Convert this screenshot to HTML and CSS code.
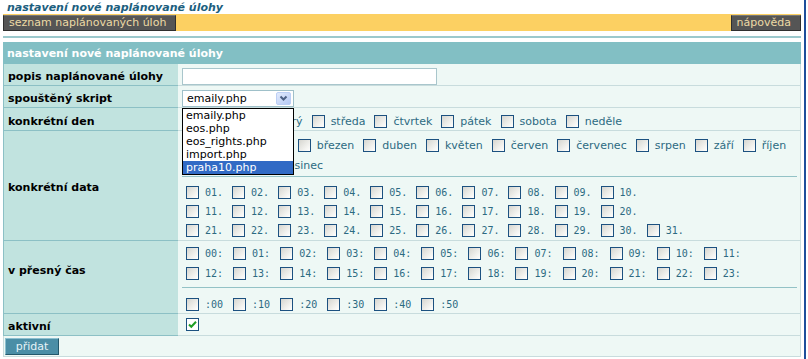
FILE: index.html
```html
<!DOCTYPE html>
<html lang="cs">
<head>
  <meta charset="UTF-8">
  <title>nastavení nové naplánované úlohy</title>
  <link rel="stylesheet" href="styles.css">
</head>
<body>
  <div class="page">
    <!-- Page title -->
    <h1 class="page-title">nastavení nové naplánované úlohy</h1>

    <!-- Toolbar -->
    <div class="toolbar">
      <a href="#" class="tool-btn">seznam naplánovaných úloh</a>
      <a href="#" class="tool-btn">nápověda</a>
    </div>

    <div class="divider"></div>

    <form class="task-form">
      <table class="form-table">
        <tr>
          <th colspan="2" class="form-head">nastavení nové naplánované úlohy</th>
        </tr>

        <!-- Description -->
        <tr>
          <td class="label">popis naplánované úlohy</td>
          <td class="value"><input type="text" class="text-input" name="popis"></td>
        </tr>

        <!-- Script select (shown opened) -->
        <tr>
          <td class="label">spouštěný skript</td>
          <td class="value">
            <div class="picker">
              <div class="picker-field">
                <span>emaily.php</span>
                <svg class="picker-arrow" width="15" height="13" viewBox="0 0 15 13">
                  <defs>
                    <linearGradient id="arrowBg" x1="0" y1="0" x2="1" y2="1">
                      <stop offset="0" stop-color="#e4ecfd"/>
                      <stop offset="1" stop-color="#b3c8f4"/>
                    </linearGradient>
                  </defs>
                  <rect x="0.5" y="0.5" width="14" height="12" rx="1.5" fill="url(#arrowBg)" stroke="#bccff5"/>
                  <path d="M4.5 4.5 L7.5 7.5 L10.5 4.5" fill="none" stroke="#4d6185" stroke-width="2"/>
                </svg>
              </div>
              <ul class="picker-list">
                <li>emaily.php</li>
                <li>eos.php</li>
                <li>eos_rights.php</li>
                <li>import.php</li>
                <li class="is-selected">praha10.php</li>
              </ul>
            </div>
          </td>
        </tr>

        <!-- Days of week -->
        <tr>
          <td class="label">konkrétní den</td>
          <td class="value value-days">
            <div class="choices">
              <label class="opt"><span class="box"></span>pondělí</label>
              <label class="opt"><span class="box"></span>úterý</label>
              <label class="opt"><span class="box"></span>středa</label>
              <label class="opt"><span class="box"></span>čtvrtek</label>
              <label class="opt"><span class="box"></span>pátek</label>
              <label class="opt"><span class="box"></span>sobota</label>
              <label class="opt"><span class="box"></span>neděle</label>
            </div>
          </td>
        </tr>

        <!-- Months and dates -->
        <tr>
          <td class="label">konkrétní data</td>
          <td class="value value-dates">
            <div class="choices choices-months">
              <label class="opt"><span class="box"></span>leden</label>
              <label class="opt"><span class="box"></span>únor</label>
              <label class="opt"><span class="box"></span>březen</label>
              <label class="opt"><span class="box"></span>duben</label>
              <label class="opt"><span class="box"></span>květen</label>
              <label class="opt"><span class="box"></span>červen</label>
              <label class="opt"><span class="box"></span>červenec</label>
              <label class="opt"><span class="box"></span>srpen</label>
              <label class="opt"><span class="box"></span>září</label>
              <label class="opt"><span class="box"></span>říjen</label>
              <label class="opt"><span class="box"></span>listopad</label>
              <label class="opt"><span class="box"></span>prosinec</label>
            </div>
            <div class="split"></div>
            <div class="num-row">
              <label class="num"><span class="box"></span>01.</label>
              <label class="num"><span class="box"></span>02.</label>
              <label class="num"><span class="box"></span>03.</label>
              <label class="num"><span class="box"></span>04.</label>
              <label class="num"><span class="box"></span>05.</label>
              <label class="num"><span class="box"></span>06.</label>
              <label class="num"><span class="box"></span>07.</label>
              <label class="num"><span class="box"></span>08.</label>
              <label class="num"><span class="box"></span>09.</label>
              <label class="num"><span class="box"></span>10.</label>
            </div>
            <div class="num-row">
              <label class="num"><span class="box"></span>11.</label>
              <label class="num"><span class="box"></span>12.</label>
              <label class="num"><span class="box"></span>13.</label>
              <label class="num"><span class="box"></span>14.</label>
              <label class="num"><span class="box"></span>15.</label>
              <label class="num"><span class="box"></span>16.</label>
              <label class="num"><span class="box"></span>17.</label>
              <label class="num"><span class="box"></span>18.</label>
              <label class="num"><span class="box"></span>19.</label>
              <label class="num"><span class="box"></span>20.</label>
            </div>
            <div class="num-row">
              <label class="num"><span class="box"></span>21.</label>
              <label class="num"><span class="box"></span>22.</label>
              <label class="num"><span class="box"></span>23.</label>
              <label class="num"><span class="box"></span>24.</label>
              <label class="num"><span class="box"></span>25.</label>
              <label class="num"><span class="box"></span>26.</label>
              <label class="num"><span class="box"></span>27.</label>
              <label class="num"><span class="box"></span>28.</label>
              <label class="num"><span class="box"></span>29.</label>
              <label class="num"><span class="box"></span>30.</label>
              <label class="num"><span class="box"></span>31.</label>
            </div>
          </td>
        </tr>

        <!-- Exact time -->
        <tr>
          <td class="label label-raised">v přesný čas</td>
          <td class="value value-times">
            <div class="num-row num-row-time">
              <label class="num"><span class="box"></span>00:</label>
              <label class="num"><span class="box"></span>01:</label>
              <label class="num"><span class="box"></span>02:</label>
              <label class="num"><span class="box"></span>03:</label>
              <label class="num"><span class="box"></span>04:</label>
              <label class="num"><span class="box"></span>05:</label>
              <label class="num"><span class="box"></span>06:</label>
              <label class="num"><span class="box"></span>07:</label>
              <label class="num"><span class="box"></span>08:</label>
              <label class="num"><span class="box"></span>09:</label>
              <label class="num"><span class="box"></span>10:</label>
              <label class="num"><span class="box"></span>11:</label>
            </div>
            <div class="num-row num-row-time">
              <label class="num"><span class="box"></span>12:</label>
              <label class="num"><span class="box"></span>13:</label>
              <label class="num"><span class="box"></span>14:</label>
              <label class="num"><span class="box"></span>15:</label>
              <label class="num"><span class="box"></span>16:</label>
              <label class="num"><span class="box"></span>17:</label>
              <label class="num"><span class="box"></span>18:</label>
              <label class="num"><span class="box"></span>19:</label>
              <label class="num"><span class="box"></span>20:</label>
              <label class="num"><span class="box"></span>21:</label>
              <label class="num"><span class="box"></span>22:</label>
              <label class="num"><span class="box"></span>23:</label>
            </div>
            <div class="split split-time"></div>
            <div class="num-row num-row-time num-row-last">
              <label class="num"><span class="box"></span>:00</label>
              <label class="num"><span class="box"></span>:10</label>
              <label class="num"><span class="box"></span>:20</label>
              <label class="num"><span class="box"></span>:30</label>
              <label class="num"><span class="box"></span>:40</label>
              <label class="num"><span class="box"></span>:50</label>
            </div>
          </td>
        </tr>

        <!-- Active -->
        <tr>
          <td class="label">aktivní</td>
          <td class="value">
            <span class="box box-checked">
              <svg width="11" height="11" viewBox="0 0 11 11">
                <path d="M2 5.5 L4.3 7.8 L9 2.8" fill="none" stroke="#1f9e25" stroke-width="2"/>
              </svg>
            </span>
          </td>
        </tr>

        <!-- Submit -->
        <tr>
          <td colspan="2" class="submit-cell">
            <button type="submit" class="add-btn">přidat</button>
          </td>
        </tr>
      </table>
    </form>
  </div>

  <div class="frame-edge"></div>
</body>
</html>
```

FILE: styles.css
```css
/* Page */
body {
  margin: 0;
  font-family: "DejaVu Sans", Verdana, sans-serif;
  font-size: 11px;
  color: #000;
  background: #fff;
  display: flex;
  min-height: 100vh;
}

.page {
  width: 798px;
  margin-left: 3px;
}

.frame-edge {
  width: 2px;
  margin-left: 3px;
  background: #1d4e9b;
}

/* Title */
.page-title {
  margin: 0;
  padding: 1px 0 0 4px;
  height: 13px;
  font-size: 11px;
  line-height: 13px;
  font-style: italic;
  font-weight: bold;
  color: #1b5e7e;
}

/* Yellow toolbar */
.toolbar {
  display: flex;
  justify-content: space-between;
  align-items: flex-start;
  height: 17px;
  background: #fcd062;
}

.tool-btn {
  margin-top: 1px;
  padding: 0 9px 0 5px;
  height: 14px;
  line-height: 14px;
  background: #555;
  border: 1px solid #2f2f2f;
  border-top-color: #777;
  color: #ecdaa5;
  text-decoration: none;
}

.divider {
  height: 2px;
  margin: 5px 0 4px;
  background: #9cc9cd;
}

/* Form table */
.form-table {
  width: 100%;
  border-collapse: separate;
  border-spacing: 0;
}

.form-table td,
.form-table th {
  box-sizing: border-box;
}

.form-head {
  height: 18px;
  padding: 0 4px;
  background: #82bfc4;
  color: #fff;
  font-weight: bold;
  text-align: left;
}

.label {
  width: 175px;
  padding: 4px 3px 0 4px;
  background: #c1e3df;
  border-left: 1px solid #8cc0c5;
  border-bottom: 1px solid #8cc0c5;
  font-weight: bold;
  white-space: nowrap;
}

.label-raised {
  padding-top: 0;
  padding-bottom: 14px;
}

.value {
  padding: 4px 3px 0 4px;
  background: #eef8f5;
  border-bottom: 1px solid #c8dcdd;
  border-right: 1px solid #c8dcdd;
  color: #2c6a82;
  vertical-align: top;
}

.form-table tr {
  height: 22px;
}

/* Text input */
.text-input {
  display: block;
  box-sizing: border-box;
  width: 255px;
  height: 17px;
  margin: 0;
  padding: 0 3px;
  border: 1px solid #a9c6cc;
  background: #fff;
  font: inherit;
}

/* Select (opened) */
.picker {
  position: relative;
  width: 112px;
}

.picker-field {
  box-sizing: border-box;
  height: 17px;
  display: flex;
  justify-content: space-between;
  align-items: center;
  padding: 0 2px 0 4px;
  border: 1px solid #9fc0c9;
  background: #fff;
  color: #000;
}

.picker-arrow {
  display: block;
}

.picker-list {
  position: absolute;
  top: 100%;
  left: 0;
  z-index: 5;
  box-sizing: border-box;
  width: 112px;
  margin: 1px 0 0;
  padding: 0;
  list-style: none;
  background: #fff;
  border: 1px solid #000;
  color: #000;
}

.picker-list li {
  height: 13px;
  line-height: 13px;
  padding-left: 3px;
}

.picker-list .is-selected {
  background: #316ac5;
  color: #fff;
}

/* Checkboxes */
.box {
  display: inline-block;
  flex: none;
  box-sizing: border-box;
  width: 13px;
  height: 13px;
  border: 1px solid #1c5180;
  background: linear-gradient(135deg, #d6d6d0 0%, #f4f4f1 70%, #fff 100%);
}

.box-checked {
  margin: 0 0 0 4px;
  background: #fff;
}

.box-checked svg {
  display: block;
}

.choices {
  display: flex;
  flex-wrap: wrap;
  column-gap: 9px;
  padding-left: 4px;
}

.opt {
  display: flex;
  align-items: center;
  gap: 6px;
  height: 20px;
  white-space: nowrap;
}

.value-days {
  padding-top: 5px;
}

.value-days .opt {
  height: 17px;
}

.value-dates {
  padding-top: 4px;
}

.value-times {
  padding-top: 2px;
}

.split {
  margin: 1px 0 6px;
  border-top: 1px solid #93c2c6;
}

.split-time {
  margin: 4px 0 7px;
}

/* Numbered rows (dates, hours) */
.num-row {
  display: flex;
  column-gap: 9px;
  height: 19px;
  padding-left: 4px;
}

.num-row-time {
  column-gap: 10px;
  height: 20px;
}

.num-row-last {
  height: 18px;
}

.num {
  display: flex;
  align-items: center;
  gap: 6px;
  font-family: "DejaVu Sans Mono", monospace;
  font-size: 10px;
}

/* Submit row */
.form-table tr:last-child {
  height: 21px;
}

.submit-cell {
  padding: 2px 1px 1px;
  background: #eef8f5;
  border-left: 1px solid #c8dcdd;
  border-right: 1px solid #c8dcdd;
  border-bottom: 1px solid #c8dcdd;
}

.add-btn {
  display: block;
  width: 54px;
  height: 17px;
  margin: 0;
  padding: 0;
  background: #4b8ea6;
  border: 1px solid;
  border-color: #8cc0d0 #24586b #24586b #8cc0d0;
  color: #e6f3f7;
  font: inherit;
  cursor: pointer;
}
```
